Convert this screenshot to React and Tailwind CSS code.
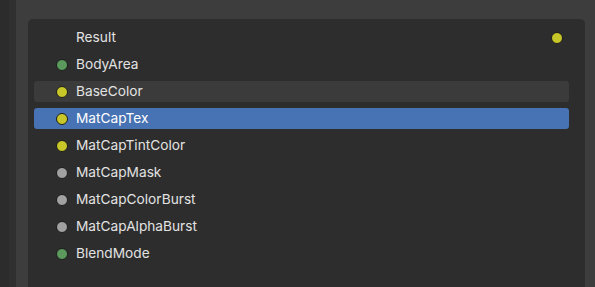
import React from "react";

const rows = [
  { name: "BodyArea", color: "#5b9a5c" },
  { name: "BaseColor", color: "#c7c729", hover: true },
  { name: "MatCapTex", color: "#c7c729", active: true },
  { name: "MatCapTintColor", color: "#c7c729" },
  { name: "MatCapMask", color: "#a1a1a1" },
  { name: "MatCapColorBurst", color: "#a1a1a1" },
  { name: "MatCapAlphaBurst", color: "#a1a1a1" },
  { name: "BlendMode", color: "#5b9a5c" },
];

function Dot({ color }) {
  return (
    <span
      className="block w-[12px] h-[12px] rounded-full border border-[#1c1c1c] shrink-0"
      style={{ backgroundColor: color }}
    />
  );
}

export default function App() {
  return (
    <div
      className="w-[595px] h-[287px] bg-[#3d3d3d] flex overflow-hidden"
      style={{ fontFamily: "Inter, 'Noto Sans', sans-serif" }}
    >
      <div className="w-[9px] h-full bg-[#2c2c2c]" />
      <div className="w-[7px] h-full bg-[#303030]" />
      <div className="w-[12px] h-full bg-[#3d3d3d]" />
      <div className="flex-1 mt-[19px] mr-[10px] bg-[#2d2d2d] rounded-t-[5px] pt-[8px] pl-[6px] pr-[16px] flex flex-col gap-[6px]">
        <div className="h-[21px] flex items-center pl-[42px] pr-[6px] text-[13.7px] text-[#e2e2e2]">
          <span className="flex-1">Result</span>
          <Dot color="#c7c729" />
        </div>
        {rows.map((r) => (
          <div
            key={r.name}
            className={
              "h-[21px] flex items-center pl-[22px] gap-[8px] rounded-[3px] text-[13.7px] " +
              (r.active
                ? "bg-[#4772b3] text-[#ffffff]"
                : r.hover
                ? "bg-[#3b3b3b] text-[#e2e2e2]"
                : "text-[#e2e2e2]")
            }
          >
            <Dot color={r.color} />
            <span>{r.name}</span>
          </div>
        ))}
      </div>
    </div>
  );
}
